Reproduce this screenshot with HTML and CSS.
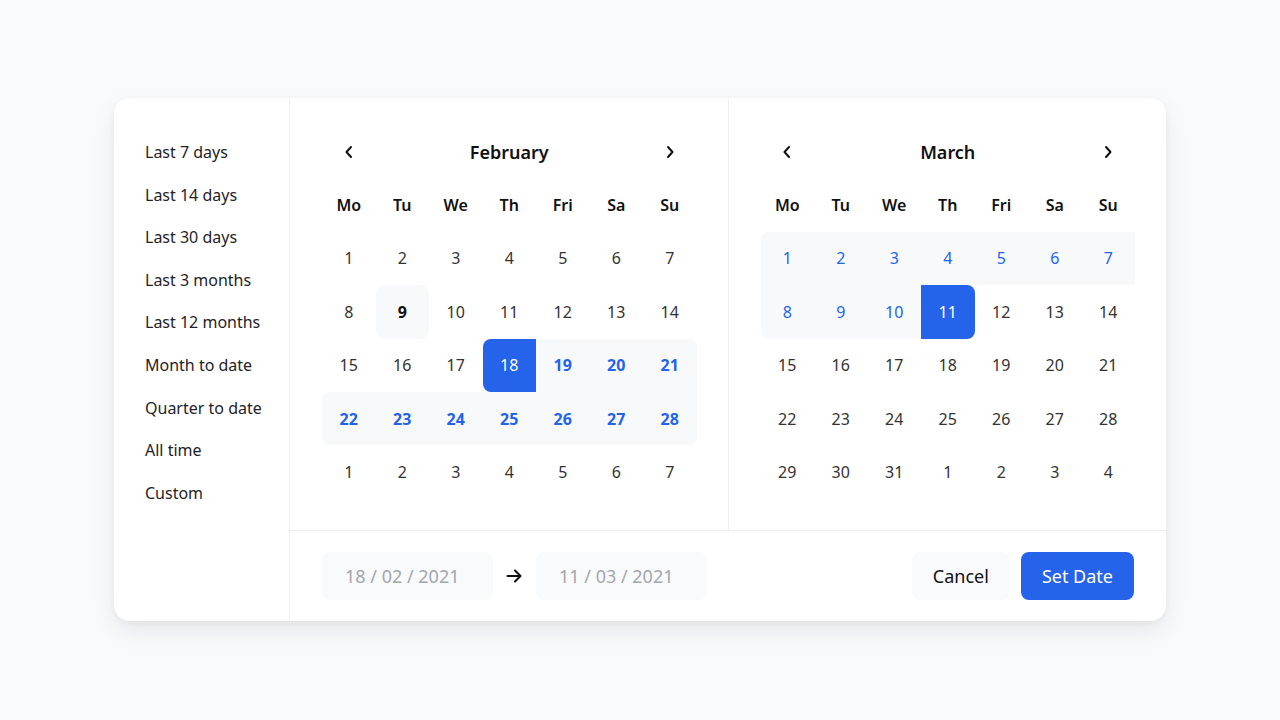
FILE: index.html
```html
<!DOCTYPE html>
<html lang="en">
<head>
    <meta charset="UTF-8">
    <meta name="viewport" content="width=device-width, initial-scale=1.0">
    <title>Date Range Picker</title>
    <link rel="stylesheet" href="styles.css">
</head>
<body>
    <div class="picker">
        <ul class="presets">
            <li>Last 7 days</li>
            <li>Last 14 days</li>
            <li>Last 30 days</li>
            <li>Last 3 months</li>
            <li>Last 12 months</li>
            <li>Month to date</li>
            <li>Quarter to date</li>
            <li>All time</li>
            <li>Custom</li>
        </ul>

        <div class="picker-main">
            <div class="calendars">
                <!-- February -->
                <section class="month">
                    <div class="month-head">
                        <button class="nav"><svg width="10" height="14" viewBox="0 0 10 14"><path d="M7 2 L2.5 7 L7 12" fill="none" stroke="#111" stroke-width="2" stroke-linecap="round" stroke-linejoin="round"/></svg></button>
                        <h2>February</h2>
                        <button class="nav"><svg width="10" height="14" viewBox="0 0 10 14"><path d="M3 2 L7.5 7 L3 12" fill="none" stroke="#111" stroke-width="2" stroke-linecap="round" stroke-linejoin="round"/></svg></button>
                    </div>
                    <div class="grid">
                        <span class="wd">Mo</span><span class="wd">Tu</span><span class="wd">We</span><span class="wd">Th</span><span class="wd">Fri</span><span class="wd">Sa</span><span class="wd">Su</span>

                        <span class="day">1</span><span class="day">2</span><span class="day">3</span><span class="day">4</span><span class="day">5</span><span class="day">6</span><span class="day">7</span>

                        <span class="day">8</span><span class="day today">9</span><span class="day">10</span><span class="day">11</span><span class="day">12</span><span class="day">13</span><span class="day">14</span>

                        <span class="day">15</span><span class="day">16</span><span class="day">17</span><span class="day picked r-tl r-bl">18</span><span class="day range strong">19</span><span class="day range strong">20</span><span class="day range strong r-tr">21</span>

                        <span class="day range strong r-tl r-bl">22</span><span class="day range strong">23</span><span class="day range strong">24</span><span class="day range strong">25</span><span class="day range strong">26</span><span class="day range strong">27</span><span class="day range strong r-br">28</span>

                        <span class="day">1</span><span class="day">2</span><span class="day">3</span><span class="day">4</span><span class="day">5</span><span class="day">6</span><span class="day">7</span>
                    </div>
                </section>

                <!-- March -->
                <section class="month">
                    <div class="month-head">
                        <button class="nav"><svg width="10" height="14" viewBox="0 0 10 14"><path d="M7 2 L2.5 7 L7 12" fill="none" stroke="#111" stroke-width="2" stroke-linecap="round" stroke-linejoin="round"/></svg></button>
                        <h2>March</h2>
                        <button class="nav"><svg width="10" height="14" viewBox="0 0 10 14"><path d="M3 2 L7.5 7 L3 12" fill="none" stroke="#111" stroke-width="2" stroke-linecap="round" stroke-linejoin="round"/></svg></button>
                    </div>
                    <div class="grid">
                        <span class="wd">Mo</span><span class="wd">Tu</span><span class="wd">We</span><span class="wd">Th</span><span class="wd">Fri</span><span class="wd">Sa</span><span class="wd">Su</span>

                        <span class="day range r-tl">1</span><span class="day range">2</span><span class="day range">3</span><span class="day range">4</span><span class="day range">5</span><span class="day range">6</span><span class="day range">7</span>

                        <span class="day range r-bl">8</span><span class="day range">9</span><span class="day range">10</span><span class="day picked r-tr r-br">11</span><span class="day">12</span><span class="day">13</span><span class="day">14</span>

                        <span class="day">15</span><span class="day">16</span><span class="day">17</span><span class="day">18</span><span class="day">19</span><span class="day">20</span><span class="day">21</span>

                        <span class="day">22</span><span class="day">23</span><span class="day">24</span><span class="day">25</span><span class="day">26</span><span class="day">27</span><span class="day">28</span>

                        <span class="day">29</span><span class="day">30</span><span class="day">31</span><span class="day">1</span><span class="day">2</span><span class="day">3</span><span class="day">4</span>
                    </div>
                </section>
            </div>

            <div class="picker-foot">
                <div class="range-inputs">
                    <div class="date-input">18 / 02 / 2021</div>
                    <svg class="arrow" width="18" height="16" viewBox="0 0 18 16"><path d="M2 8 H15 M9.5 2.5 L15 8 L9.5 13.5" fill="none" stroke="#111" stroke-width="2" stroke-linecap="round" stroke-linejoin="round"/></svg>
                    <div class="date-input">11 / 03 / 2021</div>
                </div>
                <div class="actions">
                    <button class="btn btn-light">Cancel</button>
                    <button class="btn btn-primary">Set Date</button>
                </div>
            </div>
        </div>
    </div>
</body>
</html>
```

FILE: styles.css
```css
body {
    font-family: "Noto Sans", "Open Sans", sans-serif;
    margin: 0;
    padding: 98px 0 0;
    box-sizing: border-box;
    min-height: 720px;
    background-color: #f8fafc;
    color: #222;
    display: flex;
    justify-content: center;
    align-items: flex-start;
}
.picker {
    width: 1052px;
    height: 523px;
    background: #fff;
    border-radius: 16px;
    box-shadow: 0 10px 24px rgba(15, 23, 42, 0.08), 0 2px 6px rgba(15, 23, 42, 0.04);
    display: grid;
    grid-template-columns: 176px 1fr;
    overflow: hidden;
}
.presets {
    list-style: none;
    margin: 0;
    padding: 33px 0 0 31px;
    border-right: 1px solid #eef0f3;
}
.presets li {
    font-size: 16px;
    line-height: 42.6px;
    color: #1f2328;
}
.picker-main {
    display: flex;
    flex-direction: column;
}
.calendars {
    display: flex;
    border-bottom: 1px solid #eef0f3;
}
.month {
    flex: 1;
    padding: 27px 31px 31px 32px;
}
.month + .month {
    border-left: 1px solid #eef0f3;
}
.month-head {
    display: flex;
    align-items: center;
    height: 53.4px;
}
.month-head h2 {
    flex: 1;
    margin: 0;
    text-align: center;
    font-size: 18px;
    font-weight: 600;
    color: #111;
}
.nav {
    width: 53.4px;
    height: 53.4px;
    border: none;
    background: none;
    padding: 0;
    display: flex;
    align-items: center;
    justify-content: center;
    cursor: pointer;
}
.grid {
    display: grid;
    grid-template-columns: repeat(7, 1fr);
    grid-auto-rows: 53.4px;
}
.wd, .day {
    display: flex;
    align-items: center;
    justify-content: center;
    font-size: 16px;
}
.wd {
    font-weight: 600;
    color: #111;
}
.day {
    color: #333;
}
.day.today {
    background: #f7f9fb;
    border-radius: 8px;
    font-weight: 700;
    color: #111;
}
.day.range {
    background: #f7f9fb;
    color: #2563eb;
}
.day.strong {
    font-weight: 700;
}
.day.picked {
    background: #2563eb;
    color: #fff;
}
.r-tl { border-top-left-radius: 8px; }
.r-tr { border-top-right-radius: 8px; }
.r-bl { border-bottom-left-radius: 8px; }
.r-br { border-bottom-right-radius: 8px; }

.picker-foot {
    flex: 1;
    display: flex;
    align-items: center;
    justify-content: space-between;
    padding: 0 32px 0 32px;
}
.range-inputs {
    display: flex;
    align-items: center;
    gap: 12px;
}
.arrow {
    width: 19px;
}
.date-input {
    width: 171px;
    height: 48px;
    box-sizing: border-box;
    padding-left: 23px;
    background: #f8fafc;
    border-radius: 8px;
    display: flex;
    align-items: center;
    font-size: 18px;
    color: #a3a7ad;
}
.actions {
    display: flex;
    gap: 11px;
}
.btn {
    height: 48px;
    border: none;
    border-radius: 8px;
    font-family: inherit;
    font-size: 18px;
    padding: 0 21px;
    cursor: pointer;
}
.btn-light {
    background: #f8fafc;
    color: #111;
}
.btn-primary {
    background: #2563eb;
    color: #fff;
}
```
